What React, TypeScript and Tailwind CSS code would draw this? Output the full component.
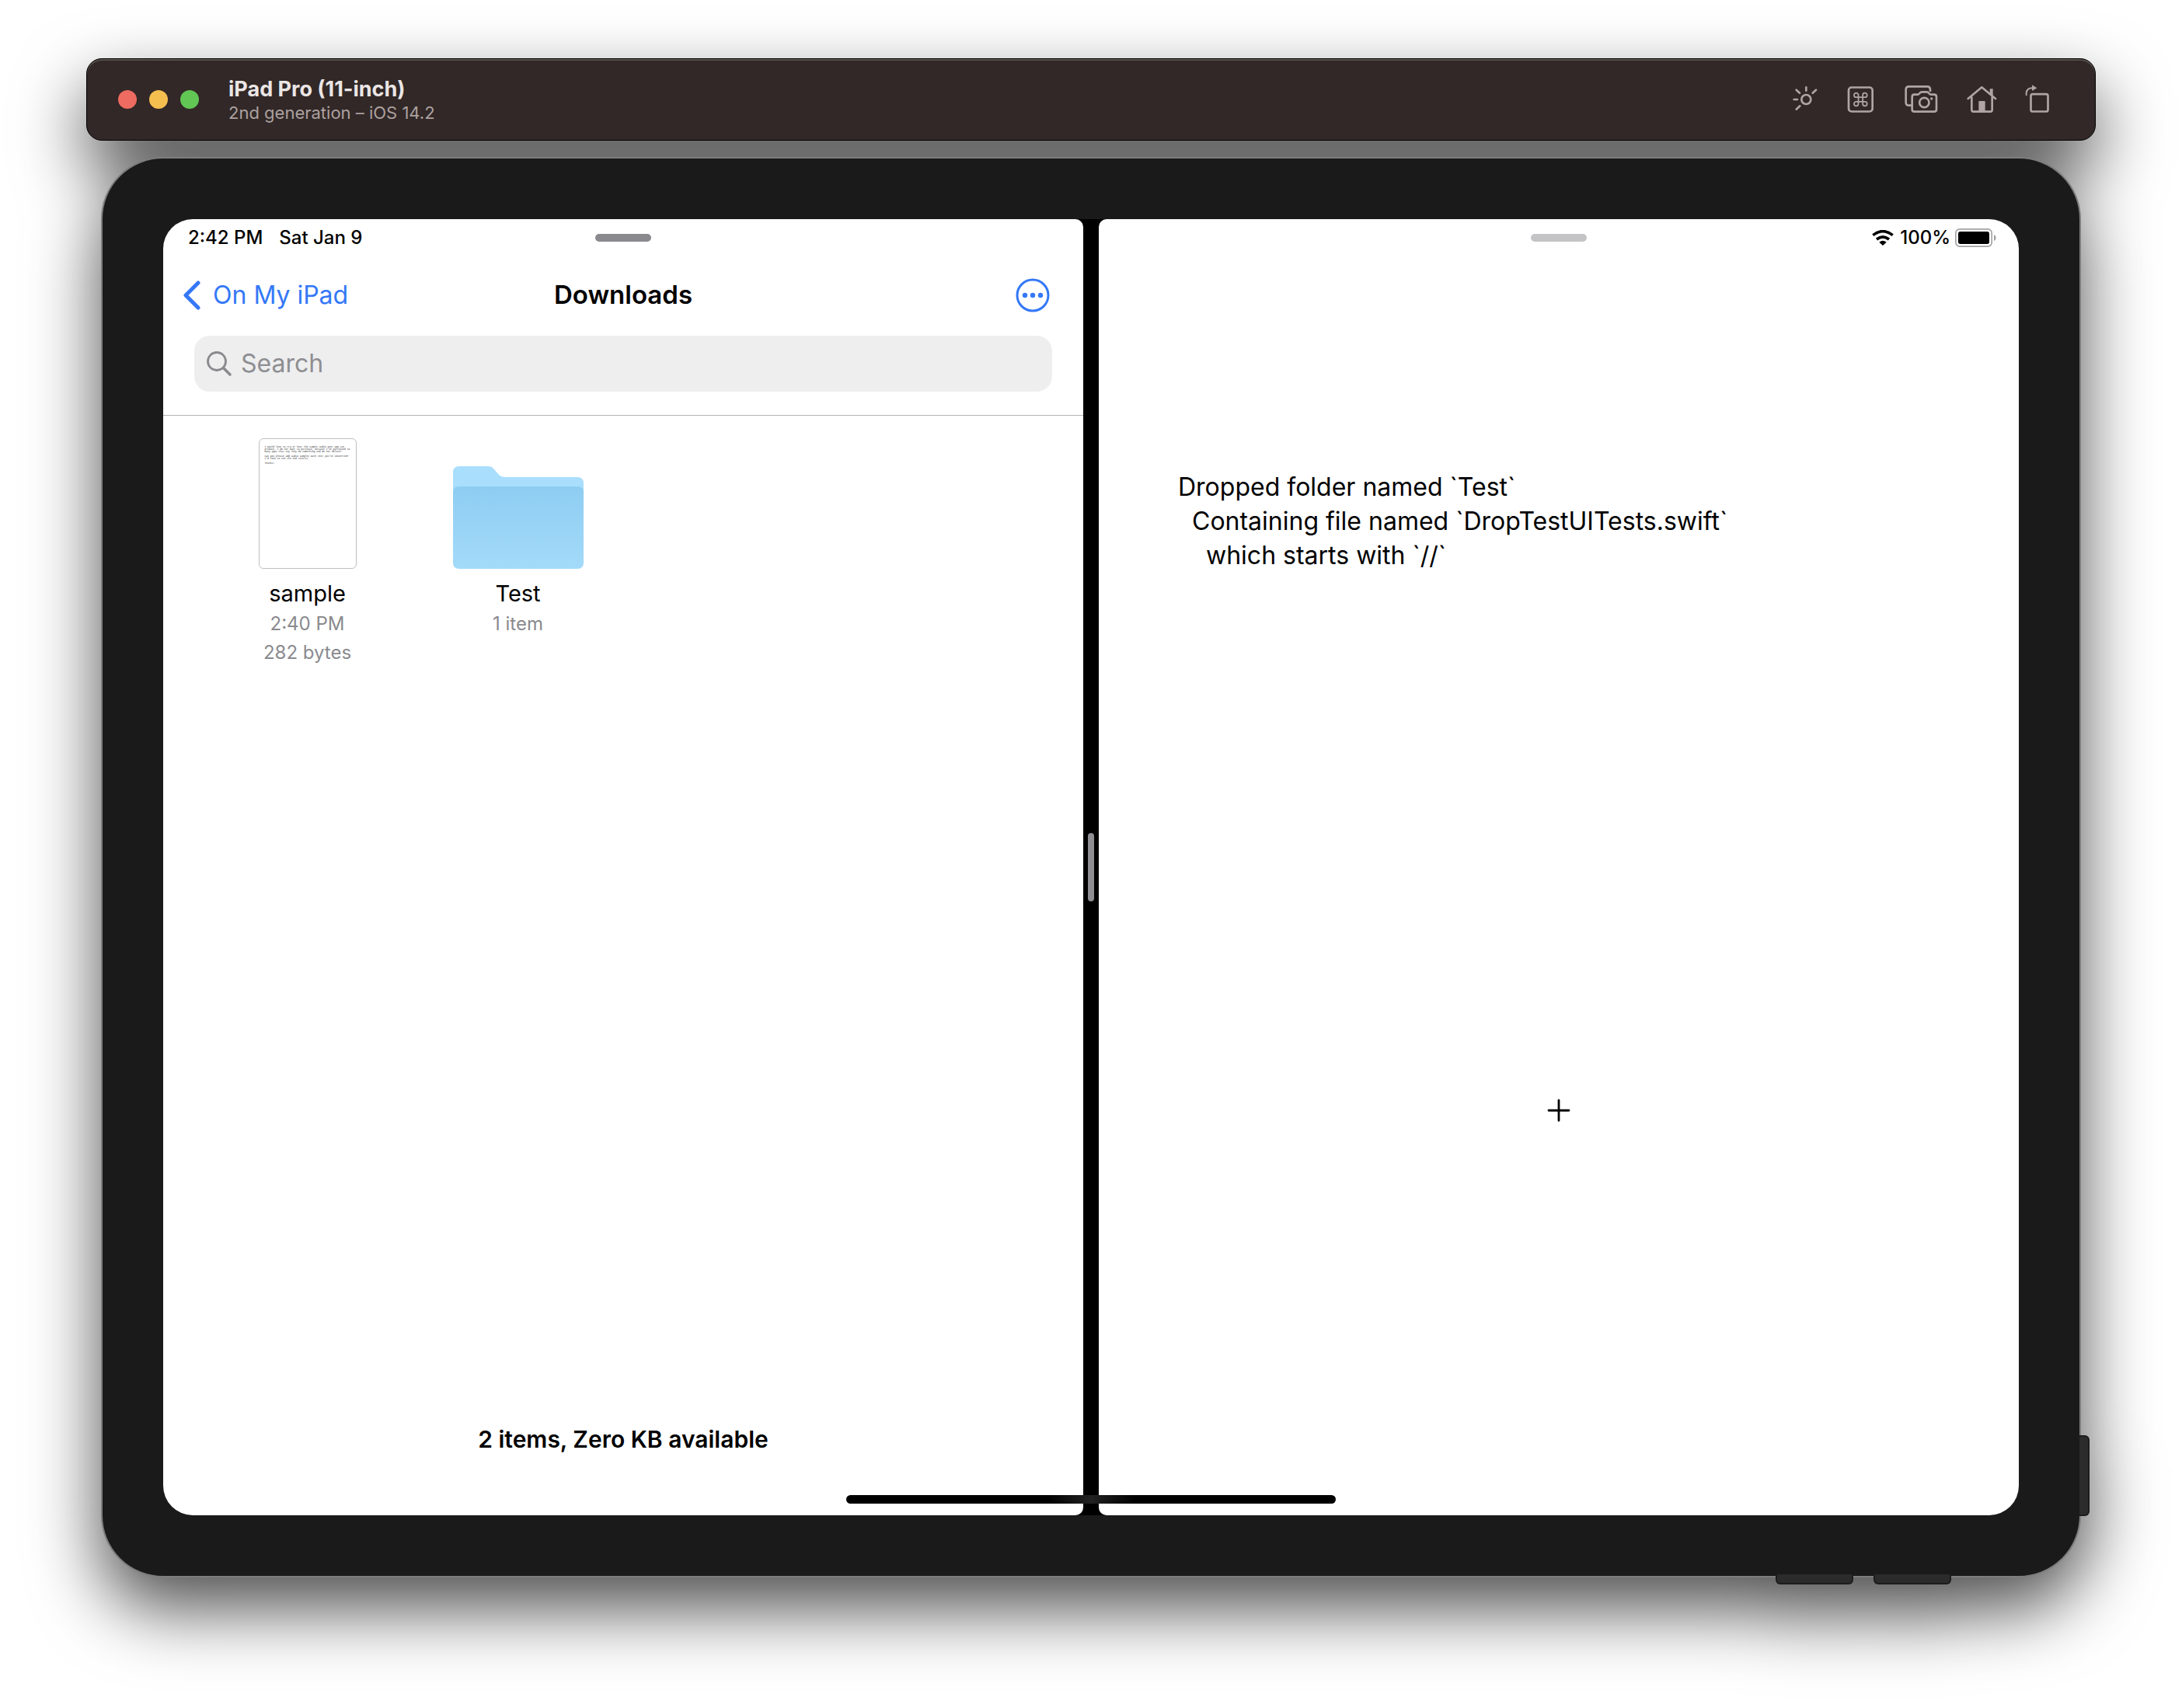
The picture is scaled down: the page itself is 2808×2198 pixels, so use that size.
import React from "react";

const ink = "#b0a5a4";

function SunIcon() {
  return (
    <svg viewBox="143 144 99 120" className="h-10 w-[33px]" fill="none" stroke={ink} strokeWidth="8" strokeLinecap="round">
      <circle cx="195" cy="204" r="18" />
      <path d="M195 157V170M148 204H161M157 167L170 179M233 167L220 179M157 242L171 229" />
    </svg>
  );
}

function CommandIcon() {
  return (
    <svg viewBox="350 144 117 120" className="h-10 w-[39px]" fill="none" stroke={ink} strokeWidth="8">
      <rect x="359" y="157.500" width="92" height="93" rx="11" />
      <g transform="translate(371.4 170.4) scale(2.8)" strokeWidth="1.9">
        <path d="M15 6v12a3 3 0 1 0 3-3H6a3 3 0 1 0 3 3V6a3 3 0 1 0-3 3h12a3 3 0 1 0-3-3" />
      </g>
    </svg>
  );
}

function CameraIcon() {
  return (
    <svg viewBox="575 144 132 120" className="h-10 w-11" fill="none" stroke={ink} strokeWidth="8" strokeLinejoin="round">
      <path d="M603 227H592Q580 227 580 215V166Q580 154 592 154H662Q674 154 674 166V174" />
      <path d="M604 194q0-9 9-9h12q4 0 8-5q4-5 9-5h18q5 0 9 5q4 5 8 5h12q9 0 9 9v48q0 9-9 9h-76q-9 0-9-9z" />
      <circle cx="651" cy="216" r="18.500" />
      <circle cx="679" cy="201" r="5" fill={ink} stroke="none" />
    </svg>
  );
}

function HomeIcon() {
  return (
    <svg viewBox="815 144 117 120" className="h-10 w-[39px]" fill="none" stroke={ink} strokeWidth="8" strokeLinecap="round" strokeLinejoin="round">
      <path d="M820 201L873 157L926 201" />
      <path d="M834 196V244q0 7 7 7h66q6 0 6-7V196" />
      <path d="M904 163h12v27l-12-10z" fill={ink} stroke="none" />
      <path d="M861 212q0-2 2-2h21q2 0 2 2v39h-25z" fill={ink} stroke="none" />
    </svg>
  );
}

function RotateIcon() {
  return (
    <svg viewBox="1040 144 93 120" className="h-10 w-[31px]" fill="none" stroke={ink} strokeWidth="8">
      <rect x="1062.500" y="183.500" width="66" height="67" rx="7" />
      <path d="M1045 187V180Q1046 160 1068 160" strokeLinecap="round" strokeWidth="6" />
      <path d="M1067 148L1086 159.500L1067 171z" fill={ink} stroke="none" />
    </svg>
  );
}

function WifiIcon() {
  return (
    <svg viewBox="0 0 84 60" className="h-5 w-7" fill="none" stroke="#000" strokeWidth="11">
      <path d="M4 20Q42-10 80 20" />
      <path d="M18 36Q42 17 66 36" />
      <path d="M42 60L28 47Q42 36 56 47z" fill="#000" stroke="none" />
    </svg>
  );
}

function BatteryIcon() {
  return (
    <svg viewBox="0 0 162 72" className="h-6 w-[54px]">
      <rect x="2.500" y="2.500" width="139" height="67" rx="15" fill="none" stroke="#a3a3a3" strokeWidth="5" />
      <rect x="12" y="12" width="120" height="48" rx="8" />
      <path d="M150 24q8 3 8 12t-8 12z" fill="#a3a3a3" />
    </svg>
  );
}

function FolderIcon() {
  return (
    <svg viewBox="0 0 168 132" className="h-[132px] w-[168px]">
      <defs>
        <linearGradient id="front" x1="0" y1="0" x2="0" y2="1">
          <stop offset="0" stopColor="#8ecdf2" />
          <stop offset="1" stopColor="#a3daf9" />
        </linearGradient>
      </defs>
      <path d="M0 8Q0 0 8 0H45Q50 0 53 4L59 11Q62 14 67 14H160Q168 14 168 22V60H0z" fill="#a9defc" />
      <path d="M0 33Q0 26 8 26H160Q168 26 168 33V124Q168 132 160 132H8Q0 132 0 124z" fill="url(#front)" />
    </svg>
  );
}

const sampleText = `I would love to try or hear the sample audio your app can
produce. I do not want to purchase, because I've purchased so
many apps that say they do something and do not deliver.

Can you please add audio samples with text you've converted?
I'd love to see the end results.

Thanks!`;

const tools = [
  { label: "Appearance", icon: <SunIcon /> },
  { label: "Keyboard", icon: <CommandIcon /> },
  { label: "Screenshot", icon: <CameraIcon /> },
  { label: "Home", icon: <HomeIcon /> },
  { label: "Rotate", icon: <RotateIcon /> },
];

function TitleBar() {
  return (
    <header className="flex h-[106px] items-center rounded-[20px] border border-black bg-[#312827] pr-[59px] pl-10 shadow-[inset_0_2px_0_#57504c]">
      <div className="flex gap-4">
        <button aria-label="Close" className="size-6 rounded-full bg-[#ed6b60]" />
        <button aria-label="Minimize" className="size-6 rounded-full bg-[#f5bf4f]" />
        <button aria-label="Zoom" className="size-6 rounded-full bg-[#62c655]" />
      </div>
      <div className="ml-[38px] flex-1 pt-px">
        <h1 className="text-[27px] leading-8 font-bold text-[#ebe6e5]">iPad Pro (11-inch)</h1>
        <p className="text-[22px] leading-7 text-[#aca09f]">2nd generation – iOS 14.2</p>
      </div>
      <div className="flex gap-9">
        {tools.map((t) => (
          <button key={t.label} aria-label={t.label}>
            {t.icon}
          </button>
        ))}
      </div>
    </header>
  );
}

function FileItem({ name, lines, children }: { name: string; lines: string[]; children: React.ReactNode }) {
  return (
    <li className="flex w-[271px] flex-col items-center">
      <div className="flex h-[168px] items-end">{children}</div>
      <span className="mt-3 text-[29px] leading-10">{name}</span>
      {lines.map((l) => (
        <span key={l} className="text-2xl leading-[37px] text-[#8a8a8e]">
          {l}
        </span>
      ))}
    </li>
  );
}

function FilesPane() {
  return (
    <section className="flex flex-1 flex-col rounded-l-[38px] rounded-r-[10px] bg-white">
      <div className="grid h-12 grid-cols-[1fr_auto_1fr] items-center pl-8 text-2xl font-medium">
        <div className="flex gap-[21px]">
          <span>2:42 PM</span>
          <span>Sat Jan 9</span>
        </div>
        <div className="mr-8 h-2.5 w-[72px] rounded-full bg-[#8a8a8e]" />
      </div>
      <nav className="grid h-[100px] grid-cols-[1fr_auto_1fr] items-center px-[26px] text-[32px]">
        <a href="#on-my-ipad" className="flex items-center gap-4 text-[#3478f6]">
          <svg viewBox="0 0 22 38" className="h-[38px] w-[22px]" fill="none" stroke="currentColor" strokeWidth="5" strokeLinecap="round" strokeLinejoin="round">
            <path d="M19 3L3 19L19 35" />
          </svg>
          On My iPad
        </a>
        <h2 className="text-[33px] font-semibold">Downloads</h2>
        <button aria-label="More" className="mr-[17px] justify-self-end text-[#3478f6]">
          <svg viewBox="0 0 44 44" className="size-11" fill="currentColor">
            <circle cx="22" cy="22" r="20" fill="none" stroke="currentColor" strokeWidth="3" />
            <circle cx="12" cy="22" r="3.200" />
            <circle cx="22" cy="22" r="3.200" />
            <circle cx="32" cy="22" r="3.200" />
          </svg>
        </button>
      </nav>
      <div className="border-b border-[#b3b3b5] px-10 pt-0.5 pb-[30px]">
        <label className="flex h-[72px] items-center gap-3 rounded-[20px] bg-[#eeeeef] px-4">
          <svg viewBox="0 0 32 32" className="size-8" fill="none" stroke="#8a8a8e" strokeWidth="2.800" strokeLinecap="round">
            <circle cx="13" cy="13" r="11.500" />
            <path d="M21.500 21.500L30 30" strokeWidth="3.500" />
          </svg>
          <input aria-label="Search" placeholder="Search" className="min-w-0 flex-1 bg-transparent text-[32px] outline-none placeholder:text-[#8e8e92]" />
        </label>
      </div>
      <ul className="flex flex-1 pt-[29px] pl-[50px]">
        <FileItem name="sample" lines={["2:40 PM", "282 bytes"]}>
          <div className="h-[168px] w-[126px] overflow-hidden rounded-md border border-[#bfbfbf] px-[7px] pt-[9px]">
            <pre className="font-['Liberation_Mono',monospace] text-[3px] leading-[3px] text-[#333]">{sampleText}</pre>
          </div>
        </FileItem>
        <FileItem name="Test" lines={["1 item"]}>
          <FolderIcon />
        </FileItem>
      </ul>
      <p className="pb-[78px] text-center text-[30px] leading-10 font-semibold">2 items, Zero KB available</p>
    </section>
  );
}

function DropPane() {
  return (
    <section className="flex flex-1 flex-col rounded-l-[10px] rounded-r-[38px] bg-white">
      <div className="grid h-12 grid-cols-[1fr_auto_1fr] items-center text-2xl font-medium">
        <div className="col-start-2 h-2.5 w-[72px] rounded-full bg-[#c4c4c6]" />
        <div className="flex items-center justify-end pr-7">
          <WifiIcon />
          <span className="mr-1.5 ml-2">100%</span>
          <BatteryIcon />
        </div>
      </div>
      <pre className="pt-[275px] pl-[102px] font-['Inter',sans-serif] text-[32px] leading-[44px]">
        {"Dropped folder named `Test`\n  Containing file named `DropTestUITests.swift`\n    which starts with `//`"}
      </pre>
      <button aria-label="Add" className="mt-[672px] self-center">
        <svg viewBox="0 0 40 40" className="size-10" fill="none" stroke="#000" strokeWidth="2.800" strokeLinecap="round">
          <path d="M20 7V33M7 20H33" />
        </svg>
      </button>
    </section>
  );
}

export default function App() {
  return (
    <div className="min-h-screen bg-white px-[111px] pt-[75px] pb-[167px] font-['Inter',sans-serif] text-black">
      <div className="flex flex-col gap-[21px] drop-shadow-[0_40px_45px_rgba(0,0,0,0.69)]">
        <TitleBar />
        <div className="relative mx-[19px] rounded-[80px] border-2 border-[#7d7d7d] bg-[#1a1a1a] p-[78px]">
          <main className="relative flex aspect-[2388/1668] rounded-[38px] bg-[linear-gradient(90deg,#1a1a1a_40%,#000_40%,#000_60%,#1a1a1a_60%)]">
            <FilesPane />
            <div className="flex w-5 items-center justify-center">
              <div className="h-[88px] w-2 rounded-full bg-[#8e8e93]" />
            </div>
            <DropPane />
            <div className="absolute bottom-[15px] left-1/2 h-[11px] w-[630px] -translate-x-1/2 rounded-full bg-[linear-gradient(90deg,#000_41%,#222_50%,#000_59%)]" />
          </main>
          <div className="absolute -right-[13px] bottom-[77px] h-[104px] w-[13px] rounded-r-md border-2 border-l-0 border-[#1c1c1c] bg-[#2b2b2b]" />
          <div className="absolute right-[165px] -bottom-[11px] flex gap-[26px]">
            <div className="h-[13px] w-[100px] rounded-b-md border-2 border-t-0 border-[#1c1c1c] bg-[#2b2b2b]" />
            <div className="h-[13px] w-[100px] rounded-b-md border-2 border-t-0 border-[#1c1c1c] bg-[#2b2b2b]" />
          </div>
        </div>
      </div>
    </div>
  );
}
